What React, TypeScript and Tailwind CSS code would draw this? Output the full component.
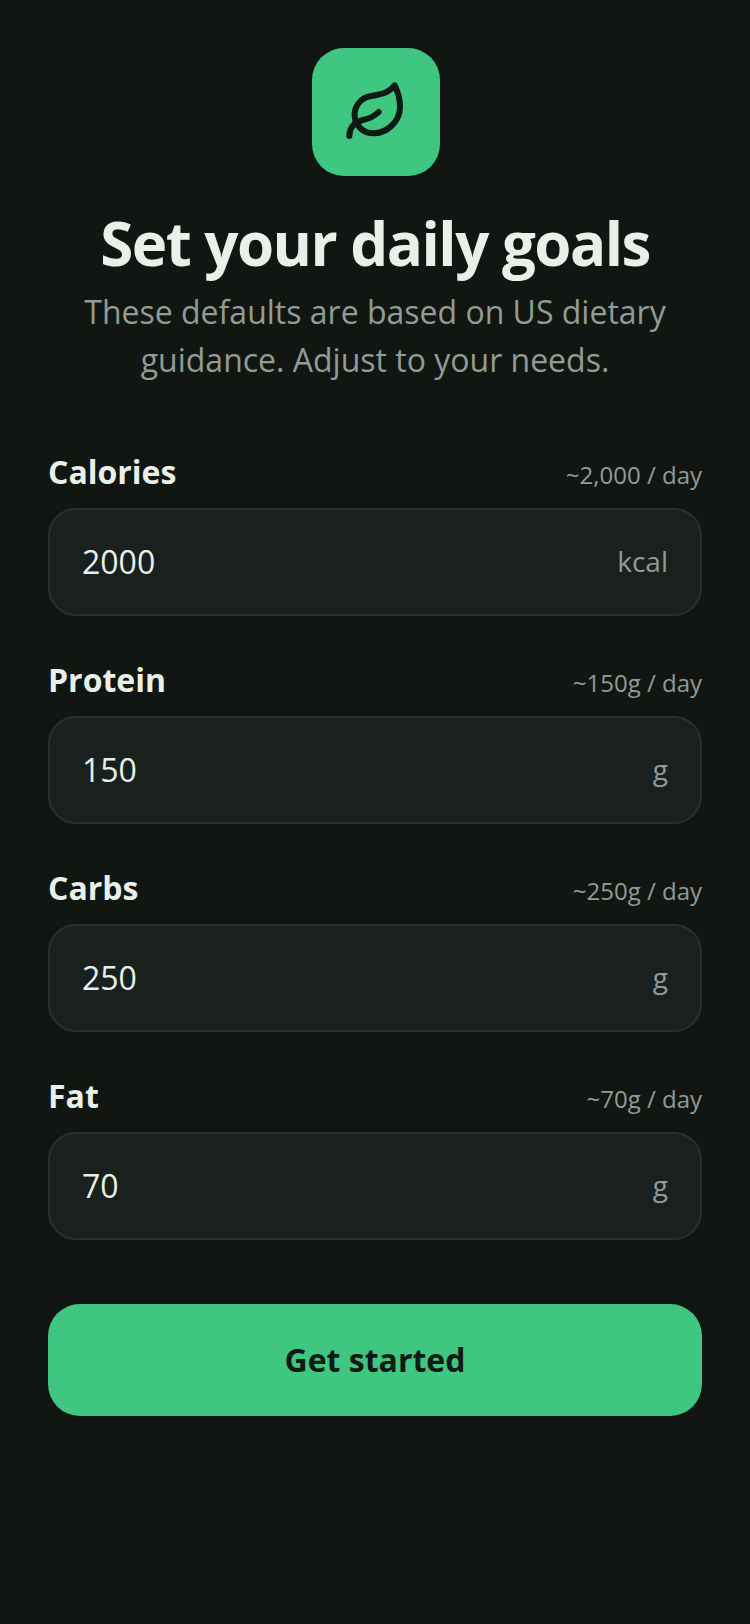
import { Leaf } from "lucide-react";

const fields = [
  { label: "Calories", hint: "~2,000 / day", value: "2000", unit: "kcal" },
  { label: "Protein", hint: "~150g / day", value: "150", unit: "g" },
  { label: "Carbs", hint: "~250g / day", value: "250", unit: "g" },
  { label: "Fat", hint: "~70g / day", value: "70", unit: "g" },
];

export default function App() {
  return (
    <div className="min-h-[1624px] bg-[#111613] px-12 pt-12 font-['Open_Sans',sans-serif]">
      <div className="flex flex-col items-center">
        <div className="ml-[2px] flex h-32 w-32 items-center justify-center rounded-[32px] bg-[#3fc680]">
          <Leaf size={64} strokeWidth={2.25} className="text-[#0f1a14]" />
        </div>
        <h1 className="mt-[31px] text-[60px] leading-[72px] font-bold tracking-[-1.5px] text-[#e9efe9]">Set your daily goals</h1>
        <p className="mt-[9px] w-[600px] text-center text-[32px] leading-[48px] text-[#939b95]">
          These defaults are based on US dietary guidance. Adjust to your needs.
        </p>
      </div>
      <div className="mt-16 flex flex-col gap-10">
        {fields.map((f) => (
          <div key={f.label} className="flex flex-col gap-3">
            <div className="flex items-baseline justify-between">
              <span className="text-[32px] leading-12 font-bold text-[#e9efe9]">{f.label}</span>
              <span className="text-[24px] text-[#939b95]">{f.hint}</span>
            </div>
            <div className="flex h-[108px] items-center justify-between rounded-[28px] border-2 border-[#2a302c] bg-[#1a201d] px-8">
              <span className="text-[32px] text-[#e9efe9]">{f.value}</span>
              <span className="pb-[2px] text-[28px] text-[#939b95]">{f.unit}</span>
            </div>
          </div>
        ))}
      </div>
      <button className="mt-16 flex h-28 w-full items-center justify-center rounded-[32px] bg-[#3fc680] text-[32px] font-bold text-[#0f1a14]">
        Get started
      </button>
    </div>
  );
}
